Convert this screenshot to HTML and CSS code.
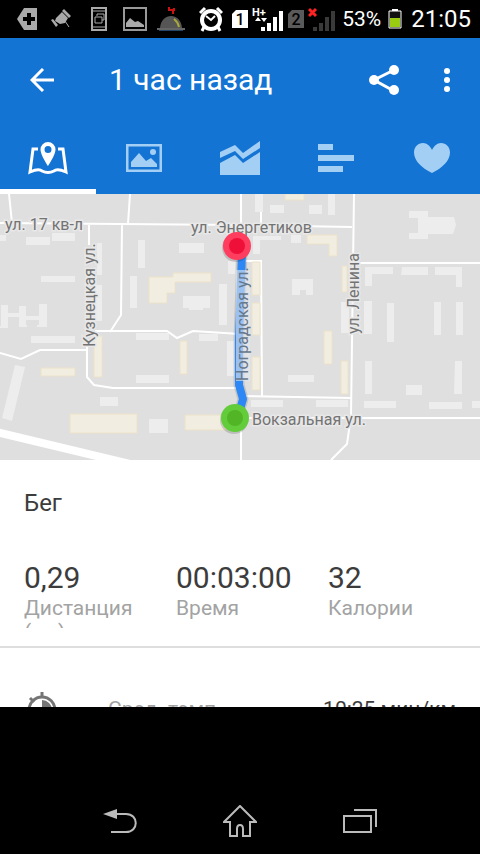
FILE: index.html
```html
<!DOCTYPE html>
<html lang="ru">
<head>
    <meta charset="utf-8">
    <meta name="viewport" content="width=device-width, initial-scale=1">
    <title>1 час назад</title>
    <link rel="stylesheet" href="styles.css">
</head>
<body>
    <div class="status-bar">
        <div class="status-icons">
            <svg width="20" height="22" viewBox="0 0 20 22"><path d="M0 11 7 0h13v22H7z" fill="#aaa"/><path d="M12 5v12M6 11h12" stroke="#000" stroke-width="4"/></svg>
            <svg width="20" height="20" viewBox="0 0 20 20"><path d="M11 2l2-2 7 7-2 2zM5 9l6-6 6 6-3 5-5 1-5-3zM0 11l2-1 5 6-2 2z" fill="#aaa"/><path d="M14 12l4 6" stroke="#aaa" stroke-width="1"/></svg>
            <svg width="16" height="24" viewBox="0 0 16 24"><path d="M1 1h14v22H1z" fill="none" stroke="#aaa" stroke-width="2"/><path d="M1 4h14M1 20h14M6 9V7h7v6h-2M4 10h7v6H4z" fill="none" stroke="#aaa" stroke-width="1"/></svg>
            <svg width="24" height="24" viewBox="0 0 24 24"><path d="M1 1h22v22H1z" fill="none" stroke="#999" stroke-width="2"/><path d="M3 20v-4l4-5 5 4 3-1 6 4v2z" fill="#aaa"/></svg>
            <svg width="28" height="26" viewBox="0 0 28 26"><path d="M3 22C4 6 24 6 25 22z" fill="#555"/><path d="M0 22h28v2H0z" fill="#666"/><path d="M2 24h24v1H2z" fill="#246"/><path d="M17 13q4 3 5 8" stroke="#a9a83a" stroke-width="2" fill="none"/><path d="M12 1v3h4v4M17 2v3" stroke="#c11" stroke-width="2" fill="none"/></svg>
        </div>
        <div class="status-signal">
            <svg width="24" height="26" viewBox="0 0 24 26"><circle cx="12" cy="14" r="9" fill="none" stroke="#fff" stroke-width="4"/><path d="M7 10l5 4 4-4" fill="none" stroke="#fff" stroke-width="2"/><path d="M1 7l5-5M18 2l5 5M5 21l-2 4M19 21l2 4" fill="none" stroke="#fff" stroke-width="3"/></svg>
            <svg width="16" height="18" viewBox="0 0 16 18"><path d="M4 0h12v18H0V4z" fill="#fff"/><text x="8" y="15" class="sim-label">1</text></svg>
            <svg width="32" height="26" viewBox="0 0 32 26"><text x="0" y="10" class="net-label">H+</text><path d="M3 15l3-4 3 4zM9 12h6l-3 4z" fill="#fff"/><path d="M9 21h4v4H9zM15 17h4v8h-4zM21 11h4v14h-4zM27 5h4v20h-4z" fill="#fff"/></svg>
            <svg width="16" height="18" viewBox="0 0 16 18"><path d="M4 0h12v18H0V4z" fill="#5a5a5a"/><text x="8" y="15" class="sim-label">2</text></svg>
            <svg width="28" height="26" viewBox="0 0 28 26"><path d="M1 3l7 7M8 3l-7 7" stroke="#f22" stroke-width="3"/><path d="M5 21h4v4H5zM11 17h4v8h-4zM17 11h4v14h-4zM23 5h4v20h-4z" fill="#3a3a3a"/></svg>
        </div>
        <span class="battery-level">53%</span>
        <svg class="battery" width="14" height="20" viewBox="0 0 14 20"><path d="M4 0h6v2H4z" fill="#fff"/><path d="M1 2h12v17H1z" fill="#111" stroke="#fff" stroke-width="1"/><path d="M2 9h10v9H2z" fill="#9c1"/></svg>
        <time class="clock">21:05</time>
    </div>

    <header class="app-bar">
        <button class="icon-btn back" aria-label="Назад">
            <svg width="24" height="24" viewBox="0 0 24 24"><path d="M13 1 2 12l11 11M2 12h22" fill="none" stroke="#fff" stroke-width="3"/></svg>
        </button>
        <h1>1 час назад</h1>
        <button class="icon-btn" aria-label="Поделиться">
            <svg width="30" height="30" viewBox="0 0 30 30"><path d="M25 5 5 15l20 11" fill="none" stroke="#fff" stroke-width="3"/><g fill="#fff"><circle cx="25" cy="5" r="5"/><circle cx="5" cy="15" r="5"/><circle cx="25" cy="25" r="5"/></g></svg>
        </button>
        <button class="icon-btn more" aria-label="Ещё">
            <svg width="6" height="24" viewBox="0 0 6 24"><g fill="#fff"><circle cx="3" cy="3" r="3"/><circle cx="3" cy="12" r="3"/><circle cx="3" cy="21" r="3"/></g></svg>
        </button>
    </header>

    <nav class="tabs">
        <button class="tab active" aria-label="Карта">
            <svg width="40" height="34" viewBox="0 0 40 34"><path d="M10 8H5L2 31q9-4 12-1 6 3 12 0 3-3 12 1L35 8h-5" fill="none" stroke="#fff" stroke-width="3"/><path fill-rule="evenodd" d="M20 1a7.500 7.500 0 0 1 7.500 7.500C27.500 14 20 25 20 25S12.500 14 12.500 8.500A7.500 7.500 0 0 1 20 1zM20 5a3.500 3.500 0 1 0 0 7 3.500 3.500 0 0 0 0-7z" fill="#fff"/></svg>
        </button>
        <button class="tab" aria-label="Фото">
            <svg width="36" height="28" viewBox="0 0 36 28"><path d="M1 1h34v26H1z" fill="none" stroke="#a3cff5" stroke-width="3"/><path d="M5 23v-5l8-9 7 8 5-3 6 6v3z" fill="#a3cff5"/><circle cx="27" cy="8" r="3" fill="#a3cff5"/></svg>
        </button>
        <button class="tab" aria-label="Графики">
            <svg width="40" height="34" viewBox="0 0 40 34"><path d="M0 11l15-7 8 8L40 0v7L23 18l-8-8-15 7zM0 22l15-8 8 8 17-11v23H0z" fill="#a3cff5"/></svg>
        </button>
        <button class="tab" aria-label="Отрезки">
            <svg width="36" height="28" viewBox="0 0 36 28"><path d="M0 0h15v6H0zM0 11h36v6H0zM0 22h25v6H0z" fill="#a3cff5"/></svg>
        </button>
        <button class="tab" aria-label="Пульс">
            <svg width="36" height="30" viewBox="0 0 36 30"><path d="M18 30C8 25 0 18 0 9.500 0 4 4 0 9 0c4 0 7 3 9 7 2-4 5-7 9-7 5 0 9 4 9 9.500C36 18 28 25 18 30z" fill="#a3cff5"/></svg>
        </button>
    </nav>

    <main class="content">
        <svg class="map" viewBox="0 194 480 266" role="img" aria-label="Маршрут">
            <rect y="194" width="480" height="266" fill="#dfdfdf"/>
            <!-- roads -->
            <g class="roads">
                <path d="M9 194l3 29M0 223l240 2 112 2M130 194l-2 30M122 225l-1 90-11 17M89 225v20"/>
                <path d="M241 194v266M354 194l-3 222-4 28-16 16M352 263h128M261 194v30M241 261h20l1 135"/>
                <path d="M0 353l21 6 19-9h47M87 340v37l7 8 19 3h127M95 331h72l10 7 16-7 47 3M240 396l111 2M241 418h239"/>
            </g>
            <path class="highway" d="M-4 432L130 464"/>
            <!-- buildings -->
            <g class="buildings">
                <path d="M0 235h6v6H0zM26 237h24v8H26zM52 233h23v8H52zM41 276h34v6H41zM97 243h5v32h-5zM95 285h7v36h-7zM138 240h7v28h-7zM130 276h7v32h-7zM179 243h25v10h-25zM219 284h8v41h-8zM183 296h27v12h-7v2h-14v-2h-6zM228 261h7v13h-7z"/>
                <path d="M1 305h7v8h11v-7h7v10h13v-12h8v23h-8v-7H26v7h-7v-10H8v10H1zM31 336h44v7H31zM0 326h8v2H0zM20 325h7v2h-7zM37 325h9v2h-9zM15 365l10 2-13 54-10-3z"/>
                <path d="M136 333h33v7h-33zM199 334h19v7h-19zM227 341h7v35h-7zM136 375h33v8h-33zM100 397h18v9h-18zM149 419h19v14h-19z"/>
                <path d="M255 194h8v18h-8zM270 205h14v8h-14zM309 205h13v9h-13zM328 194h7v21h-7zM253 236h28v4h-21v14h-7zM291 235h10v8h-10zM292 279h21v16h-7v-5h-6v5h-8z"/>
                <path d="M409 211h19v6h26l2 8-3 9h-25v5h-19v-6h9v-15h-9zM365 267h28v7h-21v12h-7zM402 267h26v8h-27zM435 267h27v20h-6v-12h-21zM341 302h8v31h-8zM364 301h8v33h-8zM387 303h7v39h-7zM434 302h7v33h-7zM456 302h7v33h-7z"/>
                <path d="M288 375h26v7h-26zM365 361h7v33h-7zM455 361h7v33h-8zM406 385h16v10h-16zM251 400h32v7h-32zM316 400h32v7h-32zM364 401h32v7h-32zM429 402h33v7h-33zM472 401h8v7h-8z"/>
            </g>
            <g class="landmarks">
                <path d="M149 277h24v-4h38v9h-36v11h-8v10h-18zM94 336h8v41h-8zM41 368h34v8H41zM180 341h7v33h-7zM70 414h67v19H70zM185 415h42v15h-42z"/>
                <path d="M285 194h19v6h-19zM307 235h30v21h-8v-12h-22zM342 266h5v26h-5zM252 262h8v33h-8zM252 303h8v32h-8zM252 357h8v33h-8zM324 331h8v33h-8zM341 361h7v33h-7z"/>
            </g>
            <!-- track -->
            <path class="track-shadow" d="M242 252l-3 88v45l4 14-4 14"/>
            <path class="track" d="M242 252l-3 88v45l4 14-4 14"/>
            <path class="track-cover" d="M243 270v111"/>
            <g class="street">
                <text x="5" y="230">ул. 17 кв-л</text>
                <text x="191" y="233">ул. Энергетиков</text>
                <text x="252" y="425">Вокзальная ул.</text>
                <text transform="translate(95 347) rotate(-90)">Кузнецкая ул.</text>
                <text transform="translate(359 334) rotate(-90)">ул. Ленина</text>
                <text class="on-track" transform="translate(248 381) rotate(-90)">Ноградская ул.</text>
            </g>
            <g class="marker-shadow"><circle cx="236" cy="248" r="14"/><circle cx="234" cy="420" r="14"/></g>
            <circle cx="237" cy="246" r="14" fill="#ff3d5f"/><circle cx="237" cy="246" r="8" fill="#ee1038"/>
            <circle cx="235" cy="418" r="14" fill="#63cc3b"/><circle cx="235" cy="418" r="8" fill="#52b526"/>
        </svg>

        <section class="summary">
            <h2>Бег</h2>
            <div class="stats">
                <div class="stat">
                    <div class="value">0,29</div>
                    <div class="label">Дистанция (км)</div>
                </div>
                <div class="stat">
                    <div class="value">00:03:00</div>
                    <div class="label">Время</div>
                </div>
                <div class="stat">
                    <div class="value">32</div>
                    <div class="label">Калории</div>
                </div>
            </div>
        </section>

        <section class="detail-row">
            <svg width="36" height="36" viewBox="0 0 36 36"><circle cx="18" cy="19" r="13" fill="none" stroke="#757575" stroke-width="3"/><path d="M18 9a10 10 0 0 1 0 20z" fill="#757575"/><path d="M18 1v5M6 7l4 4" stroke="#757575" stroke-width="3"/></svg>
            <span class="detail-name">Сред. темп</span>
            <span class="detail-value">10:25 мин/км</span>
        </section>
    </main>

    <footer class="nav-bar">
        <button class="icon-btn" aria-label="Назад">
            <svg width="34" height="26" viewBox="0 0 34 26"><path d="M0 6l14-5v10z" fill="#bbb"/><path d="M12 6h11c13 0 13 18 0 18H8" fill="none" stroke="#bbb" stroke-width="2"/></svg>
        </button>
        <button class="icon-btn" aria-label="Домой">
            <svg width="34" height="32" viewBox="0 0 34 32"><path d="M17 1 1 17h6v14h7V24q0-4 3-4t3 4v7h7V17h6z" fill="none" stroke="#bbb" stroke-width="2"/></svg>
        </button>
        <button class="icon-btn" aria-label="Недавние">
            <svg width="34" height="24" viewBox="0 0 34 24"><path d="M1 7h27v16H1zM11 1h22v17" fill="none" stroke="#bbb" stroke-width="2"/></svg>
        </button>
    </footer>
</body>
</html>
```
FILE: styles.css
```css
* { box-sizing: border-box; }
body { margin: 0; min-height: 100vh; display: flex; flex-direction: column; background: #000; color: #3c3c3c; font-family: Roboto, "Noto Sans", sans-serif; }
h1, h2 { margin: 0; font-weight: 400; }
svg { display: block; flex-shrink: 0; }
button { border: 0; padding: 0; background: none; font: inherit; color: inherit; }

.status-bar { display: flex; align-items: center; height: 38px; padding: 0 9px 0 17px; color: #fff; }
.status-icons { display: flex; align-items: center; gap: 14px; flex: 1; }
.status-icons svg:nth-child(3) { margin-left: 6px; }
.status-icons svg:nth-child(4) { margin-left: 2px; }
.status-icons svg:nth-child(5) { margin-left: -4px; }
.status-signal { display: flex; align-items: center; gap: 4px; margin-right: 6px; }
.status-signal svg:first-child { margin-right: 5px; }
.sim-label { font-size: 16px; font-weight: 500; text-anchor: middle; }
.net-label { font-size: 11px; font-weight: 700; fill: #fff; }
.battery-level { font-size: 21px; }
.battery { margin: 0 9px 0 7px; }
.clock { font-size: 24px; }

.app-bar { display: flex; align-items: center; height: 84px; padding: 0 24px 0 30px; background: #1474d4; color: #fff; }
.app-bar h1 { flex: 1; font-size: 30px; line-height: 36px; }
.icon-btn { display: flex; align-items: center; justify-content: center; }
.back { margin-right: 55px; }
.more { width: 18px; margin-left: 39px; }

.tabs { display: flex; height: 72px; background: #1474d4; }
.tab { flex: 1; display: flex; align-items: center; justify-content: center; border-bottom: 5px solid transparent; padding-top: 5px; }
.tab.active { border-bottom-color: #fff; }

.content { background: #fff; max-height: 513px; overflow: hidden; }
.map { width: 100%; height: auto; }
.roads { fill: none; stroke: #fff; stroke-width: 2; }
.highway { fill: none; stroke: #fff; stroke-width: 8; }
.buildings { fill: #ededed; }
.landmarks { fill: #f1ede1; stroke: #ece2c8; stroke-width: 1; }
.track, .track-shadow { fill: none; stroke: #2d88f5; stroke-width: 8; stroke-linejoin: round; }
.track-shadow { stroke: #000; stroke-width: 11; opacity: 0.12; }
.track-cover { fill: none; stroke: #e4e8ee; stroke-width: 14; opacity: 0.6; }
.street { font-size: 16px; fill: #737373; stroke: #e8e8e8; stroke-width: 3; paint-order: stroke; }
.on-track { stroke: none; fill: #66788c; }
.marker-shadow { fill: #000; opacity: 0.15; }

.summary { padding: 28px 0 18px 24px; border-bottom: 2px solid #dedede; }
.summary h2 { font-size: 24px; line-height: 30px; margin-bottom: 42px; }
.stats { display: grid; grid-template-columns: repeat(3, 1fr); }
.stat { padding-right: 24px; }
.value { font-size: 30px; line-height: 36px; white-space: nowrap; }
.label { font-size: 21px; line-height: 24px; max-height: 32px; overflow: hidden; color: #a3a3a3; }

.detail-row { display: flex; align-items: center; height: 122px; padding: 0 24px; font-size: 21px; }
.detail-name { flex: 1; margin-left: 48px; color: #a3a3a3; }

.nav-bar { display: flex; justify-content: space-between; align-items: center; height: 66px; margin-top: auto; padding: 0 103px; }
```
